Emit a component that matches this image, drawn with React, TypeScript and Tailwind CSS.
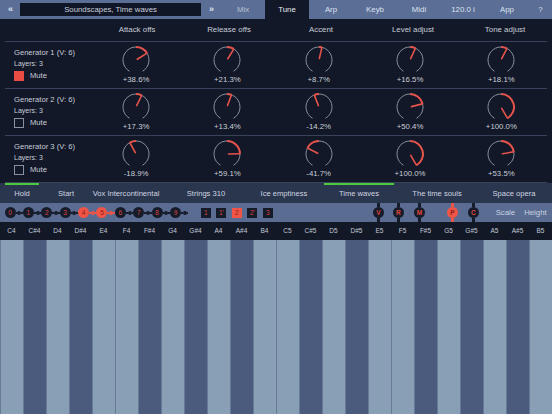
import React from "react"

const font = { fontFamily: '"Liberation Sans", Arial, sans-serif' }

const columns = ["Attack offs", "Release offs", "Accent", "Level adjust", "Tone adjust"]

const generators = [
  { name: "Generator 1 (V: 6)", muted: true, values: [38.6, 21.3, 8.7, 16.5, 18.1] },
  { name: "Generator 2 (V: 6)", muted: false, values: [17.3, 13.4, -14.2, 50.4, 100.0] },
  { name: "Generator 3 (V: 6)", muted: false, values: [-18.9, 59.1, -41.7, 100.0, 53.5] },
]

const topTabs = ["Mix", "Tune", "Arp", "Keyb", "Midi", "120.0 i", "App"]

const presets = [
  { label: "Hold", w: "w-[44px]", line: "mx-[5px]" },
  { label: "Start", w: "w-[44px]" },
  { label: "Vox Intercontinental", w: "w-[76px]" },
  { label: "Strings 310", w: "w-[84px]" },
  { label: "Ice emptiness", w: "w-[72px]" },
  { label: "Time waves", w: "w-[78px]", line: "mx-[4px]" },
  { label: "The time souls", w: "w-[78px]" },
  { label: "Space opera", w: "w-[76px]" },
]

const notes = ["C", "C#", "D", "D#", "E", "F", "F#", "G", "G#", "A", "A#", "B"]
const keys = [4, 5].flatMap((oct) => notes.map((n) => ({ label: `${n}${oct}`, black: n.includes("#") })))

function pt(a: number, r: number): [number, number] {
  const rad = (a * Math.PI) / 180
  return [15 + r * Math.sin(rad), 15 - r * Math.cos(rad)]
}

function arc(from: number, to: number, r: number) {
  const [x1, y1] = pt(from, r)
  const [x2, y2] = pt(to, r)
  const large = Math.abs(to - from) > 180 ? 1 : 0
  return `M ${x1} ${y1} A ${r} ${r} 0 ${large} 1 ${x2} ${y2}`
}

function Knob({ value }: { value: number }) {
  const a = (value / 100) * 150
  const [px, py] = pt(a, 12.5)
  const [sx, sy] = pt(a, 1.5)
  return (
    <svg width="30" height="30" viewBox="0 0 30 30">
      <path d={arc(-150, 150, 13)} fill="none" stroke="#8a8f9c" strokeWidth="1" />
      {Math.abs(a) > 0.5 && (
        <path d={a > 0 ? arc(0, a, 13) : arc(a, 0, 13)} fill="none" stroke="#e5534b" strokeWidth="2" />
      )}
      <line x1={sx} y1={sy} x2={px} y2={py} stroke="#e5534b" strokeWidth="1.6" strokeLinecap="round" />
    </svg>
  )
}

function fmt(v: number) {
  return `${v >= 0 ? "+" : ""}${v.toFixed(1)}%`
}

function Connector({ red }: { red?: boolean }) {
  const c = red ? "bg-[#ef5446]" : "bg-[#161b2a]"
  return (
    <div className="flex w-[7.4px] items-center">
      <div className={`h-[2px] flex-1 ${c}`} />
      <div className={`h-[4px] w-[4px] shrink-0 rounded-full ${c}`} />
      <div className={`h-[2px] flex-1 ${c}`} />
    </div>
  )
}

function Pin({ letter, active }: { letter: string; active?: boolean }) {
  const c = active ? "bg-[#ef5446]" : "bg-[#161b2a]"
  return (
    <div className="flex h-full w-[11px] flex-col items-center">
      <div className={`w-[3px] flex-1 ${c}`} />
      <div
        className={`flex h-[11px] w-[11px] shrink-0 items-center justify-center rounded-full text-[6.5px] font-bold ${c} ${
          active ? "text-[#8a1f18]" : "text-[#e0453a]"
        }`}
      >
        {letter}
      </div>
      <div className={`w-[3px] flex-1 ${c}`} />
    </div>
  )
}

export default function App() {
  return (
    <div className="flex h-[414px] w-[552px] flex-col overflow-hidden bg-[#121827]" style={font}>
      {/* top bar */}
      <div className="flex h-[19px] shrink-0 items-stretch bg-[#5b6e96] text-[7.8px] text-[#dde3ee]">
        <div className="flex w-[20px] items-center justify-center text-[9px] font-bold tracking-[-1px]">‹‹</div>
        <div className="my-[3px] flex w-[181px] items-center justify-center bg-[#111626] text-[7.8px] text-[#c9cfdc]">
          Soundscapes, Time waves
        </div>
        <div className="flex w-[20px] items-center justify-center text-[9px] font-bold tracking-[-1px]">››</div>
        {topTabs.map((t) => (
          <div
            key={t}
            className={`flex w-[44px] items-center justify-center ${
              t === "Tune" ? "bg-[#121827] text-[#e8ecf3]" : t === "Mix" ? "text-[#b7c0d3]" : ""
            }`}
          >
            {t}
          </div>
        ))}
        <div className="flex flex-1 items-center justify-center">?</div>
      </div>

      {/* column headers */}
      <div className="flex h-[22px] shrink-0 items-center text-[7.9px] text-[#c6ccd8]">
        <div className="w-[91px]" />
        {columns.map((c) => (
          <div key={c} className="w-[92px] text-center">
            {c}
          </div>
        ))}
      </div>

      {/* generator rows */}
      <div className="mx-[5px] border-t border-[#38435b]">
        {generators.map((g) => (
          <div key={g.name} className="flex h-[47px] border-b border-[#38435b]">
            <div className="flex w-[86px] flex-col pl-[9px] pt-[5px] text-[#c7cdd9]">
              <div className="text-[7.6px] leading-[11px]">{g.name}</div>
              <div className="text-[7px] leading-[11px]">Layers: 3</div>
              <div className="mt-[1px] flex h-[12px] items-center gap-[6px]">
                <div
                  className={`h-[10px] w-[10px] ${
                    g.muted ? "bg-[#e84c42]" : "border border-[#8a90a0]"
                  }`}
                />
                <span className="text-[7.6px]">Mute</span>
              </div>
            </div>
            {g.values.map((v, i) => (
              <div key={i} className="flex w-[92px] flex-col items-center pt-[3px]">
                <Knob value={v} />
                <div className="text-[7.8px] leading-[10px] text-[#c8ced9]">{fmt(v)}</div>
              </div>
            ))}
          </div>
        ))}
      </div>

      <div className="flex-1" />

      {/* presets bar */}
      <div className="flex h-[20px] shrink-0 bg-[#2a364d] text-[7.6px] text-[#cfd5e1]">
        {presets.map((p) => (
          <div key={p.label} className={`flex flex-col ${p.w}`}>
            <div className={`h-[2px] ${p.line ? `${p.line} bg-[#4cc93f]` : ""}`} />
            <div className="flex flex-1 items-center justify-center whitespace-nowrap">{p.label}</div>
          </div>
        ))}
      </div>

      {/* chain row */}
      <div className="flex h-[19px] shrink-0 items-center bg-[#5a6c92]">
        <div className="ml-[4.5px] flex items-center">
          {Array.from({ length: 10 }, (_, i) => {
            const on = i === 4 || i === 5
            return (
              <React.Fragment key={i}>
                <div
                  className={`flex h-[11px] w-[11px] items-center justify-center rounded-full text-[6.5px] ${
                    on ? "bg-[#ef5446] text-[#8a1f18]" : "bg-[#161b2a] text-[#d8443a]"
                  }`}
                >
                  {i}
                </div>
                <Connector red={on} />
              </React.Fragment>
            )
          })}
        </div>
        <div className="ml-[12.5px] flex items-center gap-[5.5px]">
          {["1", "1'", "2", "2'", "3"].map((s) => (
            <div
              key={s}
              className={`flex h-[10px] w-[10px] items-center justify-center text-[6.5px] ${
                s === "2" ? "bg-[#ef5446] text-[#8a1f18]" : "bg-[#161b2a] text-[#d8443a]"
              }`}
            >
              {s}
            </div>
          ))}
        </div>
        <div className="ml-[100px] flex h-full items-center">
          <Pin letter="V" />
          <div className="w-[9px]" />
          <Pin letter="R" />
          <div className="w-[10px]" />
          <Pin letter="M" />
          <div className="w-[22px]" />
          <Pin letter="P" active />
          <div className="w-[10px]" />
          <Pin letter="C" />
        </div>
        <div className="ml-[11.5px] flex text-[7.8px] text-[#c9d2e3]">
          <div className="w-[30px] text-center">Scale</div>
          <div className="w-[30px] text-center">Height</div>
        </div>
      </div>

      {/* note labels */}
      <div className="grid h-[18px] shrink-0 grid-cols-[repeat(24,23px)] items-center bg-[#131826] text-[6.5px] text-[#c2c9d8]">
        {keys.map((k) => (
          <div key={k.label} className="text-center">
            {k.label}
          </div>
        ))}
      </div>

      {/* keys */}
      <div className="grid h-[174px] shrink-0 grid-cols-[repeat(24,23px)]">
        {keys.map((k) => (
          <div
            key={k.label}
            className={`border-l border-[#667a98] ${k.black ? "bg-[#4a5b7d]" : "bg-[#899fb5]"}`}
          />
        ))}
      </div>
    </div>
  )
}
